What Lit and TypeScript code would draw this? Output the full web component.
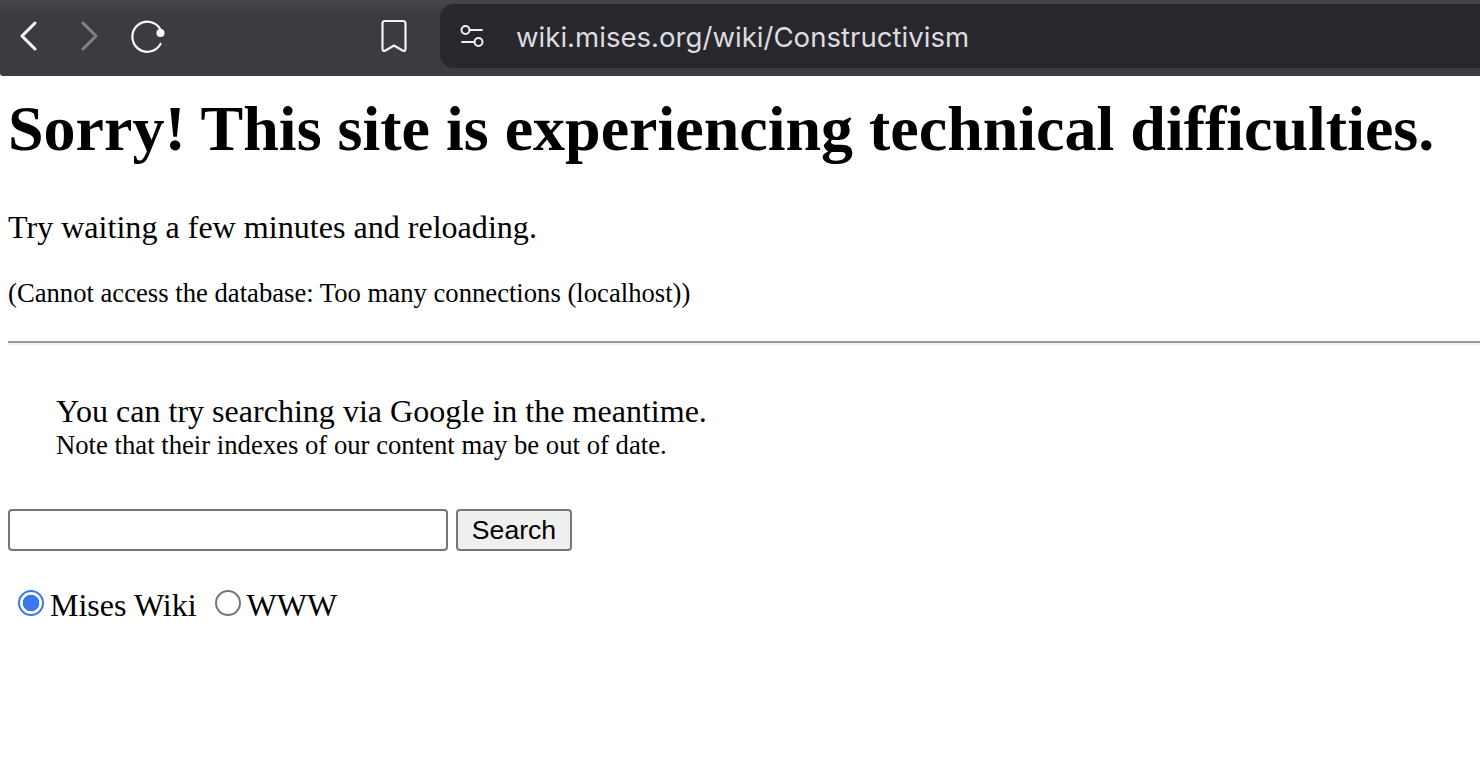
import { LitElement, html, css } from "lit"
import { customElement } from "lit/decorators.js"

@customElement("app-root")
export class AppRoot extends LitElement {
    static styles = css`
        :host {
            display: block;
            width: 1480px;
            height: 780px;
            overflow: hidden;
            background: #fff;
            color: #000;
            font-family: "Liberation Serif", "Times New Roman", serif;
        }
        .toolbar {
            height: 76px;
            box-sizing: border-box;
            padding: 4px 0 8px 0;
            display: flex;
            background: linear-gradient(#47464c, #3c3b40 20%);
            border-bottom-left-radius: 3px;
        }
        .tools {
            width: 440px;
            flex: none;
            display: flex;
            align-items: center;
            box-sizing: border-box;
            padding-left: 18px;
        }
        .tools svg {
            display: block;
            flex: none;
            fill: none;
            stroke-linecap: round;
            stroke-linejoin: round;
        }
        .back { margin-right: 38px; }
        .forward { margin-right: 31px; }
        .reload { margin-right: 213px; }
        .address {
            flex: 1;
            display: flex;
            align-items: center;
            background: #28272c;
            border-radius: 14px 0 0 14px;
            padding-left: 19px;
        }
        .address svg { flex: none; margin-right: 31px; fill: none; }
        .url {
            font-family: Inter, "Liberation Sans", sans-serif;
            font-size: 27.6px;
            color: #dcdce0;
            white-space: nowrap;
            margin-top: 1px;
        }
        main { padding: 0 8px; }
        h1 {
            margin: 0;
            padding-top: 20px;
            font-size: 64px;
            line-height: 66px;
            font-weight: bold;
            white-space: nowrap;
        }
        .retry {
            margin: 47px 0 0;
            font-size: 32.1px;
            line-height: 36px;
        }
        .cause {
            margin: 32px 0 0;
            font-size: 26.67px;
            line-height: 32px;
        }
        .rule {
            margin: 32px -8px 0 0;
            height: 2px;
            background: #999;
            border-bottom: 2px solid #eee;
        }
        .hint { margin: 48px 0 0 48px; }
        .hint-main {
            font-size: 32.05px;
            line-height: 36px;
        }
        .hint-note {
            font-size: 26.69px;
            line-height: 32px;
        }
        .search {
            margin-top: 48px;
            display: flex;
            gap: 8px;
        }
        .field {
            width: 440px;
            height: 42px;
            box-sizing: border-box;
            border: 2px solid #767676;
            border-radius: 4px;
            background: #fff;
            padding: 0;
        }
        .go {
            width: 116px;
            height: 42px;
            box-sizing: border-box;
            border: 2px solid #767676;
            border-radius: 4px;
            background: #efefef;
            padding: 0;
            font-family: "Liberation Sans", Arial, sans-serif;
            font-size: 26.6px;
            color: #000;
        }
        .scopes {
            margin: 35px 0 0 10px;
            display: flex;
            align-items: flex-start;
            font-size: 32px;
            line-height: 38px;
        }
        .scope { display: flex; align-items: flex-start; }
        .scope + .scope { margin-left: 18px; }
        .radio {
            width: 26px;
            height: 26px;
            box-sizing: border-box;
            border-radius: 50%;
            border: 2px solid #767676;
            background: #fff;
            margin: 4px 6px 0 0;
            appearance: none;
            flex: none;
        }
        .radio:checked {
            border: 2px solid #3b77f0;
            background: radial-gradient(circle, #3b77f0 0 8px, #fff 8.6px);
        }
    `

    render() {
        return html`
            <div class="toolbar">
                <div class="tools">
                    <svg class="back" width="22" height="32" viewBox="0 0 22 32" stroke="#fff" stroke-width="3">
                        <path d="M17 3 L4 16 L17 29"></path>
                    </svg>
                    <svg class="forward" width="22" height="32" viewBox="0 0 22 32" stroke="#808083" stroke-width="3">
                        <path d="M5 3 L18 16 L5 29"></path>
                    </svg>
                    <svg class="reload" width="36" height="36" viewBox="0 0 36 36" stroke="#fff" stroke-width="2.2">
                        <path d="M29.5 11.5 A15 15 0 1 0 29.5 26"></path>
                        <circle cx="29.5" cy="15" r="4" fill="#fff" stroke="none"></circle>
                    </svg>
                    <svg width="28" height="34" viewBox="0 0 28 34" stroke="#f2f2f2" stroke-width="2.2">
                        <path d="M2.5 4.5 Q2.5 2 5 2 H23 Q25.5 2 25.5 4.5 V29.5 Q25.5 33 22.5 31.5 L14 26.5 L5.5 31.5 Q2.5 33 2.5 29.5 Z"></path>
                    </svg>
                </div>
                <div class="address">
                    <svg width="26" height="26" viewBox="0 0 26 26" stroke="#f0f0f2" stroke-width="2">
                        <circle cx="6.5" cy="7" r="4"></circle>
                        <path d="M10.5 7 H23" stroke-linecap="round"></path>
                        <circle cx="19.5" cy="19" r="4"></circle>
                        <path d="M3 19 H15.5" stroke-linecap="round"></path>
                    </svg>
                    <span class="url">wiki.mises.org/wiki/Constructivism</span>
                </div>
            </div>
            <main>
                <h1>Sorry! This site is experiencing technical difficulties.</h1>
                <p class="retry">Try waiting a few minutes and reloading.</p>
                <p class="cause">(Cannot access the database: Too many connections (localhost))</p>
                <div class="rule"></div>
                <div class="hint">
                    <div class="hint-main">You can try searching via Google in the meantime.</div>
                    <div class="hint-note">Note that their indexes of our content may be out of date.</div>
                </div>
                <form class="search">
                    <input class="field" type="text" />
                    <button class="go" type="button">Search</button>
                </form>
                <div class="scopes">
                    <label class="scope"><input class="radio" type="radio" name="scope" checked />Mises Wiki</label>
                    <label class="scope"><input class="radio" type="radio" name="scope" />WWW</label>
                </div>
            </main>
        `
    }
}
